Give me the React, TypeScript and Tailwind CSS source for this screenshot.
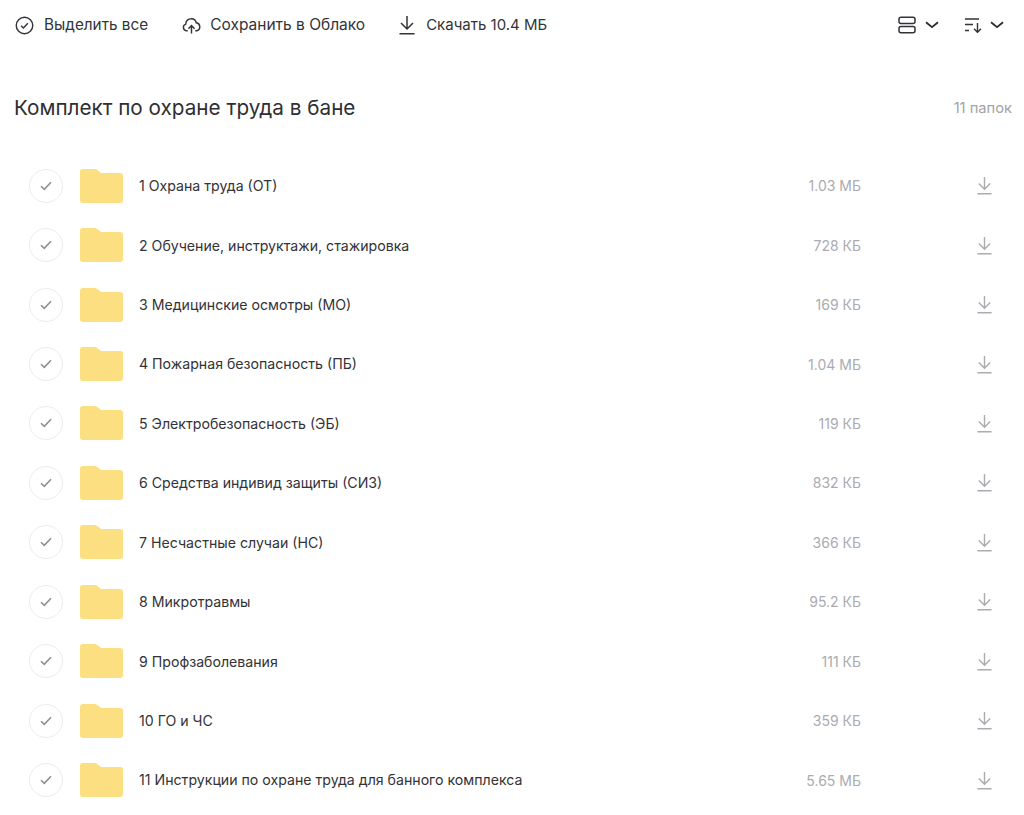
const rows: [string, string][] = [
  ["1 Охрана труда (ОТ)", "1.03 МБ"],
  ["2 Обучение, инструктажи, стажировка", "728 КБ"],
  ["3 Медицинские осмотры (МО)", "169 КБ"],
  ["4 Пожарная безопасность (ПБ)", "1.04 МБ"],
  ["5 Электробезопасность (ЭБ)", "119 КБ"],
  ["6 Средства индивид защиты (СИЗ)", "832 КБ"],
  ["7 Несчастные случаи (НС)", "366 КБ"],
  ["8 Микротравмы", "95.2 КБ"],
  ["9 Профзаболевания", "111 КБ"],
  ["10 ГО и ЧС", "359 КБ"],
  ["11 Инструкции по охране труда для банного комплекса", "5.65 МБ"],
];

function Download({ className }: { className: string }) {
  return (
    <svg viewBox="0 0 18 20" className={className} fill="none" stroke="currentColor" strokeWidth="1.5">
      <path d="M9 1V13.5M3 8l6 6 6-6M1.5 18.7h15" />
    </svg>
  );
}

function Chevron() {
  return (
    <svg viewBox="0 0 14 8" className="w-[14px] h-[8px] text-[#2b2b2f]" fill="none" stroke="currentColor" strokeWidth="1.8">
      <path d="M1 1.2l6 5 6-5" />
    </svg>
  );
}

export default function App() {
  return (
    <div className="w-[1024px] h-[815px] overflow-hidden bg-white text-[#2b2b2f] font-['Inter',sans-serif]">
      <div className="h-[50px] flex items-center pl-[15px] pr-[20px] text-[15.3px] text-[#333338]">
        <div className="flex items-center gap-[10px]">
          <svg viewBox="0 0 20 20" className="w-[19px] h-[19px]" fill="none" stroke="currentColor" strokeWidth="1.5">
            <circle cx="10" cy="10" r="8.7" />
            <path d="M6.4 10.2l2.5 2.5 4.6-5" />
          </svg>
          <span>Выделить все</span>
        </div>
        <div className="flex items-center gap-[9px] ml-[34px]">
          <svg viewBox="0 0 20 20" className="w-[19px] h-[19px]" fill="none" stroke="currentColor" strokeWidth="1.5">
            <path d="M6 15.5H4.6a3.6 3.6 0 0 1-.6-7 5.6 5.6 0 0 1 11-1.4 4.3 4.3 0 0 1 .6 8.4H14" />
            <path d="M10 18.5v-8M6.8 13.3L10 10l3.2 3.3" />
          </svg>
          <span className="text-[15.5px]">Сохранить в Облако</span>
        </div>
        <div className="flex items-center gap-[10px] ml-[33px]">
          <Download className="w-[18px] h-[20px]" />
          <span className="text-[15px]">Скачать 10.4 МБ</span>
        </div>
        <div className="ml-auto flex items-center">
          <svg viewBox="0 0 18 18" className="w-[18px] h-[18px]" fill="none" stroke="currentColor" strokeWidth="1.5">
            <rect x="1" y="1.2" width="16" height="6.3" rx="2" />
            <rect x="1" y="10.5" width="16" height="6.3" rx="2" />
          </svg>
          <span className="ml-[9px] flex"><Chevron /></span>
          <svg viewBox="0 0 17 15" className="w-[17px] h-[15px] ml-[26px]" fill="none" stroke="currentColor" strokeWidth="1.4">
            <path d="M0 1h14M0 6.5h8M0 12.5h4M12.5 5v9M9 10.8l3.5 3.5 3.5-3.5" />
          </svg>
          <span className="ml-[8px] flex"><Chevron /></span>
        </div>
      </div>

      <div className="mt-[45px] h-[26px] flex items-center justify-between pl-[14px] pr-[12px]">
        <h1 className="text-[20.7px] font-normal text-[#2f2f33]">Комплект по охране труда в бане</h1>
        <span className="text-[14.7px] text-[#a3a3a8]">11 папок</span>
      </div>

      <div className="mt-[35px]">
        {rows.map(([name, size]) => (
          <div key={name} className="h-[59.45px] flex items-center pl-[29px] pr-[31px]">
            <div className="w-[34px] h-[34px] rounded-full border border-[#ececee] flex items-center justify-center">
              <svg viewBox="0 0 12 10" className="w-[12px] h-[10px] text-[#8f8f94]" fill="none" stroke="currentColor" strokeWidth="1.6">
                <path d="M1 5.2l3.3 3.2L11 1.3" />
              </svg>
            </div>
            <svg viewBox="0 0 43 34" className="w-[43px] h-[34px] ml-[17px]">
              <path d="M3 0h11.5c1.5 0 2.5.6 3.5 1.6L21 4h19a3 3 0 0 1 3 3V31a3 3 0 0 1-3 3H3a3 3 0 0 1-3-3V3a3 3 0 0 1 3-3z" fill="#fbdf80" />
            </svg>
            <span className="ml-[16px] text-[14.15px] text-[#333338]">{name}</span>
            <span className="ml-auto text-[14px] text-[#ababb0]">{size}</span>
            <Download className="w-[17px] h-[19px] ml-[115px] text-[#ababb0]" />
          </div>
        ))}
      </div>
    </div>
  );
}
